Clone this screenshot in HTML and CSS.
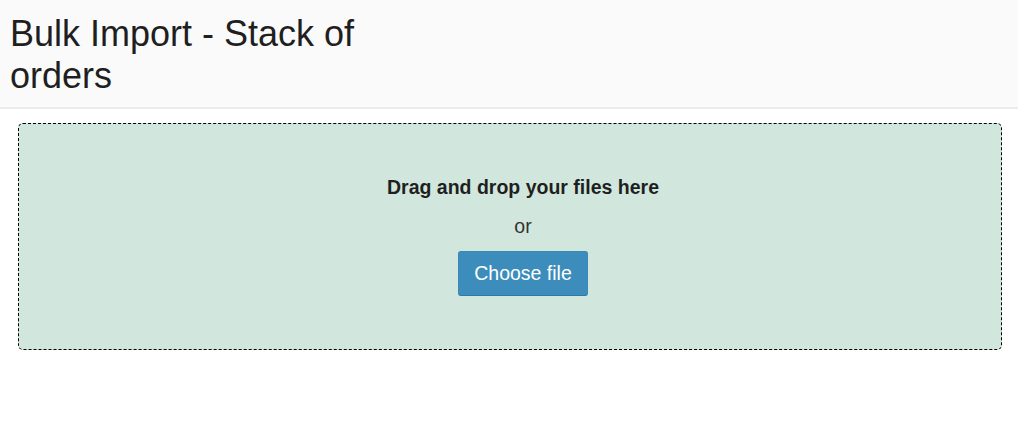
FILE: index.html
```html
<!DOCTYPE html>
<html>
<head>
<meta charset="utf-8">
<link rel="stylesheet" href="styles.css">
</head>
<body>
<header class="page-header">
  <h1 class="title">Bulk Import - Stack of orders</h1>
</header>
<main class="content">
  <div class="dropzone">
    <p class="dz-title">Drag and drop your files here</p>
    <p class="dz-or">or</p>
    <button class="btn-choose" type="button">Choose file</button>
  </div>
</main>
</body>
</html>
```

FILE: styles.css
```css
html, body {
  margin: 0;
  padding: 0;
  background: #ffffff;
  font-family: "Liberation Sans", Arial, sans-serif;
  color: #222222;
}

.page-header {
  background: #fafafa;
  border-bottom: 2px solid #ececec;
  padding: 13px 10px 11px;
}

.title {
  margin: 0;
  max-width: 380px;
  font-size: 36px;
  font-weight: normal;
  line-height: 41.5px;
  color: #1f1f1f;
}

.content {
  padding: 14px 16px 0 18px;
}

.dropzone {
  background: #d1e7dd;
  border: 1px dashed #000000;
  border-radius: 5px;
  padding: 52px 0 53px 26px;
  display: flex;
  flex-direction: column;
  align-items: center;
}

.dz-title {
  margin: 0;
  font-size: 19.5px;
  font-weight: bold;
  line-height: 22px;
  color: #1f1f1f;
}

.dz-or {
  margin: 17px 0 0;
  font-size: 19.5px;
  line-height: 22px;
  color: #333333;
}

.btn-choose {
  margin-top: 14px;
  height: 45px;
  padding: 0 15.5px;
  background: #3c8dbc;
  color: #ffffff;
  border: 1px solid #3a88b6;
  border-bottom-color: #2f79a3;
  border-radius: 3px;
  font-family: "Liberation Sans", Arial, sans-serif;
  font-size: 19.5px;
}
```
